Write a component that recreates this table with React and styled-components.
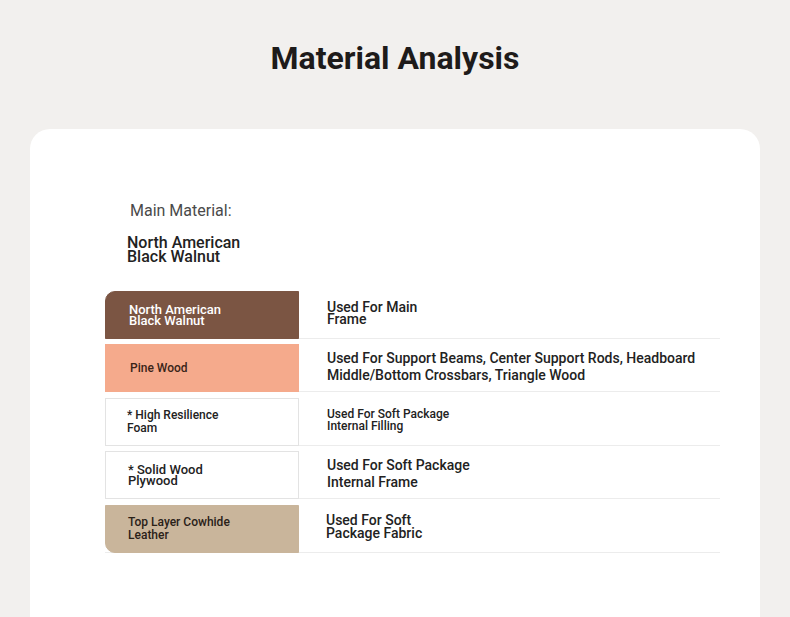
import React from 'react';
import styled, { createGlobalStyle } from 'styled-components';

const GlobalStyle = createGlobalStyle`
  html, body {
    margin: 0;
    padding: 0;
    background: #f2f0ee;
    font-family: Roboto, "Liberation Sans", sans-serif;
    overflow: hidden;
  }
`;

const Page = styled.div`
  width: 790px;
  height: 617px;
  display: flex;
  flex-direction: column;
  align-items: center;
`;

const Title = styled.h1`
  margin: 38px 0 0;
  font-size: 32px;
  line-height: 40px;
  font-weight: 700;
  color: #1e1b1a;
`;

const Card = styled.div`
  margin-top: 51px;
  width: 730px;
  flex: 1;
  background: #ffffff;
  border-radius: 20px 20px 0 0;
  padding: 72px 40px 0 75px;
  box-sizing: border-box;
`;

const MainBlock = styled.div`
  display: flex;
  flex-direction: column;
  padding-left: 22px;
`;

const MainLabel = styled.div`
  font-size: 16px;
  line-height: 20px;
  color: #4a4a4a;
  padding-left: 3px;
`;

const MainValue = styled.div`
  margin-top: 15px;
  font-size: 16px;
  line-height: 14px;
  font-weight: 500;
  color: #222;
`;

const Table = styled.div`
  margin-top: 21px;
  display: flex;
  flex-direction: column;
  width: 615px;
`;

const Row = styled.div`
  display: grid;
  grid-template-columns: 194px 1fr;
  height: 53.5px;
  border-bottom: 1px solid #ececec;
  box-sizing: border-box;
`;

const Swatch = styled.div`
  align-self: end;
  height: 48px;
  box-sizing: border-box;
  display: flex;
  align-items: center;
  padding-left: ${p => p.$indent}px;
  background: ${p => p.$bg};
  border: 1px solid ${p => (p.$bg === '#ffffff' ? '#e3e3e3' : p.$bg)};
  border-radius: ${p => p.$radius || '0'};
  color: ${p => p.$color};
  font-size: ${p => p.$size}px;
  line-height: ${p => p.$lh}px;
  font-weight: 500;
  margin-bottom: -1px;
`;

const Usage = styled.div`
  display: flex;
  align-items: center;
  padding-left: ${p => p.$indent}px;
  padding-top: 4px;
  font-size: ${p => p.$size}px;
  line-height: ${p => p.$lh}px;
  font-weight: 500;
  color: #222;
`;

const rows = [
  {
    name: ['North American', 'Black Walnut'],
    bg: '#7b5543',
    color: '#ffffff',
    size: 13,
    lh: 11,
    indent: 23,
    radius: '10px 0 0 0',
    use: ['Used For Main', 'Frame'],
    useSize: 14,
    useLh: 12,
    useIndent: 28,
  },
  {
    name: ['Pine Wood'],
    bg: '#f5aa8c',
    color: '#3a2418',
    size: 12,
    lh: 13,
    indent: 24,
    use: ['Used For Support Beams, Center Support Rods, Headboard', 'Middle/Bottom Crossbars, Triangle Wood'],
    useSize: 14,
    useLh: 17,
    useIndent: 28,
  },
  {
    name: ['* High Resilience', 'Foam'],
    bg: '#ffffff',
    color: '#222',
    size: 12,
    lh: 13,
    indent: 21,
    use: ['Used For Soft Package', 'Internal Filling'],
    useSize: 12,
    useLh: 12,
    useIndent: 28,
  },
  {
    name: ['* Solid Wood', 'Plywood'],
    bg: '#ffffff',
    color: '#222',
    size: 13,
    lh: 11,
    indent: 22,
    use: ['Used For Soft Package', 'Internal Frame'],
    useSize: 14,
    useLh: 17,
    useIndent: 28,
  },
  {
    name: ['Top Layer Cowhide', 'Leather'],
    bg: '#c9b59b',
    color: '#2a2118',
    size: 12,
    lh: 13,
    indent: 22,
    radius: '0 0 0 10px',
    use: ['Used For Soft', 'Package Fabric'],
    useSize: 14,
    useLh: 13,
    useIndent: 27,
  },
];

const Lines = ({ lines }) => (
  <div>
    {lines.map((l, i) => (
      <div key={i}>{l}</div>
    ))}
  </div>
);

export default function App() {
  return (
    <Page>
      <GlobalStyle />
      <Title>Material Analysis</Title>
      <Card>
        <MainBlock>
          <MainLabel>Main Material:</MainLabel>
          <MainValue>
            <div>North American</div>
            <div>Black Walnut</div>
          </MainValue>
        </MainBlock>
        <Table>
          {rows.map((r, i) => (
            <Row key={i}>
              <Swatch
                $bg={r.bg}
                $color={r.color}
                $size={r.size}
                $lh={r.lh}
                $indent={r.indent}
                $radius={r.radius}
              >
                <Lines lines={r.name} />
              </Swatch>
              <Usage $size={r.useSize} $lh={r.useLh} $indent={r.useIndent}>
                <Lines lines={r.use} />
              </Usage>
            </Row>
          ))}
        </Table>
      </Card>
    </Page>
  );
}
